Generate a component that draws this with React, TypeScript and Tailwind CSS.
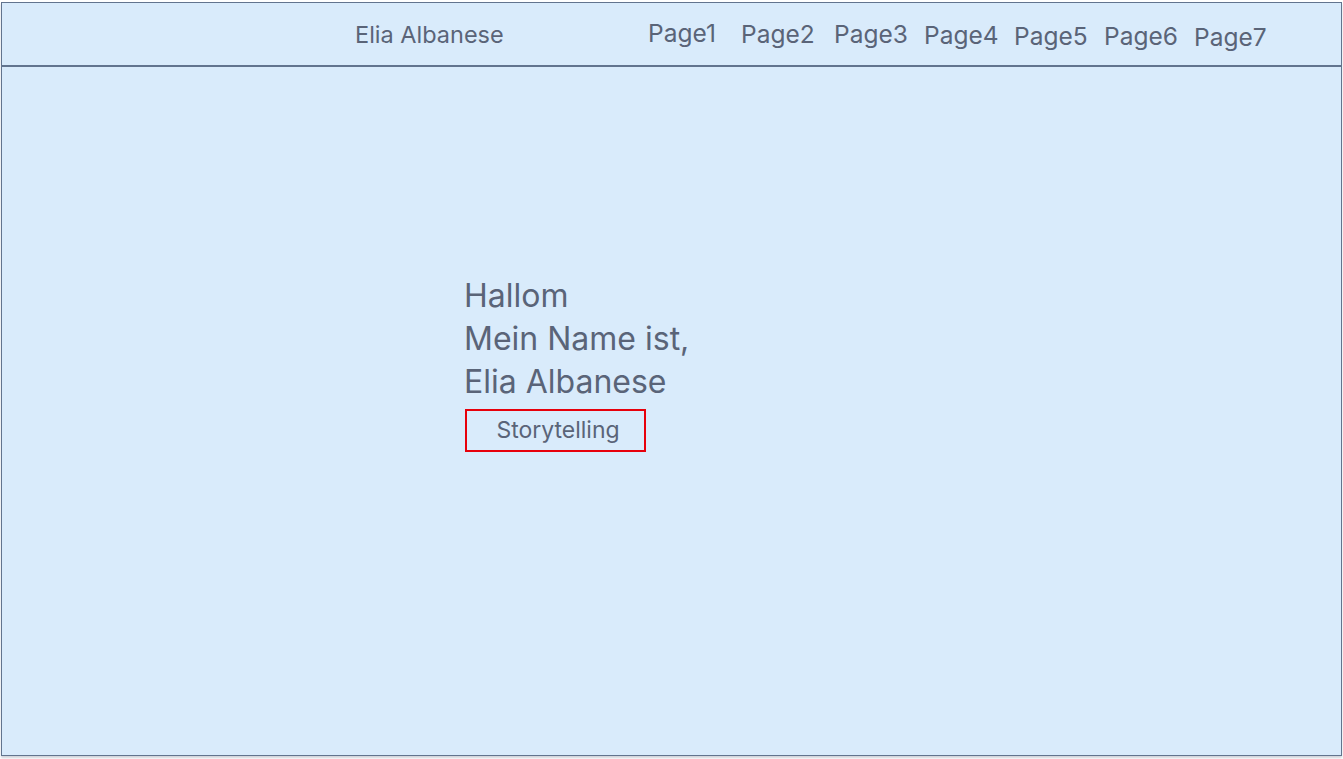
export default function App() {
  const pages = [
    { label: 'Page1', cls: 'ml-[646px] mt-[17px] w-[93px]' },
    { label: 'Page2', cls: 'mt-[18px] w-[93px]' },
    { label: 'Page3', cls: 'mt-[18px] w-[90px]' },
    { label: 'Page4', cls: 'mt-[19px] w-[90px]' },
    { label: 'Page5', cls: 'mt-[20px] w-[90px]' },
    { label: 'Page6', cls: 'mt-[20px] w-[90px]' },
    { label: 'Page7', cls: 'mt-[21px] w-[80px]' },
  ];

  return (
    <div className="w-[1343px] h-[759px] bg-white pt-[2px] pl-[1px] font-['Inter',sans-serif] text-[#5a6478]">
      <div className="w-[1341px] h-[754px] bg-[#d9ebfb] border border-slate-500 shadow-[0_2px_2px_rgba(120,130,150,0.35)]">
        {/* header */}
        <div className="relative h-[64px] border-b-2 border-slate-500 flex">
          <span className="absolute left-[353px] top-[19px] text-[23.5px] leading-[26px]">
            Elia Albanese
          </span>
          <div className="flex">
            {pages.map((p) => (
              <span key={p.label} className={`${p.cls} text-[24.5px] leading-[26px] h-[26px]`}>
                {p.label}
              </span>
            ))}
          </div>
        </div>

        {/* hero */}
        <div className="pl-[462px] pt-[207px]">
          <div className="text-[32px] leading-[43px]">
            <div>Hallom</div>
            <div>Mein Name ist,</div>
            <div>Elia Albanese</div>
          </div>
          <div className="mt-[6px] ml-[1px] w-[181px] h-[43px] border-2 border-red-600 pl-[5px] flex items-center justify-center text-[23px]">
            Storytelling
          </div>
        </div>
      </div>
    </div>
  );
}
